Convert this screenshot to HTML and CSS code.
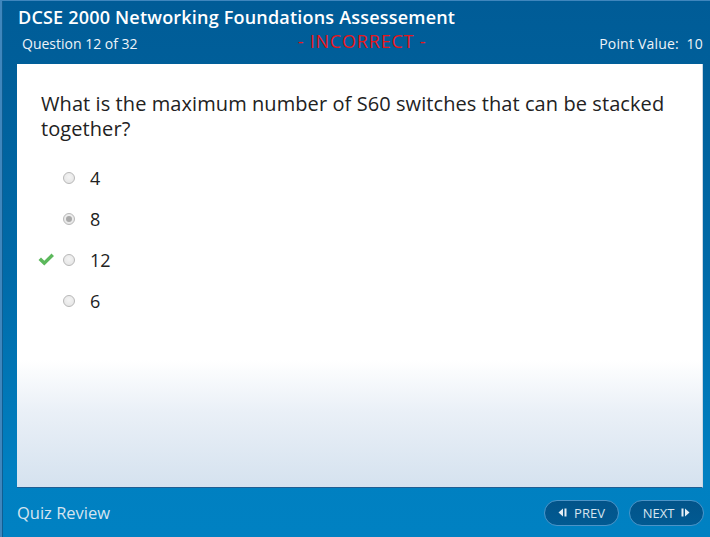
FILE: index.html
```html
<!DOCTYPE html>
<html>
<head>
<meta charset="utf-8">
<link rel="stylesheet" href="styles.css">
</head>
<body>
<div class="app">
  <header class="header">
    <h1 class="title">DCSE 2000 Networking Foundations Assessement</h1>
    <div class="subbar">
      <span class="qnum">Question 12 of 32</span>
      <span class="status">- INCORRECT -</span>
      <span class="points">Point Value:&nbsp; 10</span>
    </div>
  </header>
  <main class="panel">
    <p class="question">What is the maximum number of S60 switches that can be stacked together?</p>
    <ul class="options">
      <li class="option"><span class="mark"></span><span class="radio"></span><span class="label">4</span></li>
      <li class="option"><span class="mark"></span><span class="radio selected"></span><span class="label">8</span></li>
      <li class="option"><span class="mark"><svg width="17" height="13" viewBox="0 0 17 13"><path d="M0.5 7 L3 4.5 L6.3 7.8 L13.5 0.6 L16 3.1 L6.3 12.6 Z" fill="#5cb85c"/></svg></span><span class="radio"></span><span class="label">12</span></li>
      <li class="option"><span class="mark"></span><span class="radio"></span><span class="label">6</span></li>
    </ul>
  </main>
  <footer class="footer">
    <span class="review">Quiz Review</span>
    <div class="nav">
      <button class="btn"><svg width="9" height="9" viewBox="0 0 9 9"><path d="M5 0.5 L0.5 4.5 L5 8.5 Z M6.5 0.5 H8.5 V8.5 H6.5 Z" fill="#e6eef5"/></svg>PREV</button>
      <button class="btn">NEXT<svg width="9" height="9" viewBox="0 0 9 9"><path d="M0.5 0.5 H2.5 V8.5 H0.5 Z M4 0.5 L8.5 4.5 L4 8.5 Z" fill="#e6eef5"/></svg></button>
    </div>
  </footer>
</div>
</body>
</html>
```

FILE: styles.css
```css
* { box-sizing: border-box; }
html, body { margin: 0; padding: 0; }
body { width: 710px; height: 537px; overflow: hidden; font-family: "Open Sans", "Noto Sans", sans-serif; }

.app {
  width: 710px;
  height: 537px;
  display: flex;
  flex-direction: column;
  background: linear-gradient(#005c97 0, #005f9a 14%, #006aa8 50%, #0080c1 88%, #0081c2 100%);
  border-top: 1px solid #3f86bd;
  border-left: 2px solid #3f86bd;
  box-shadow: inset 1px 0 0 #0f5e92;
}

.header { height: 63px; padding: 0 7px 0 16px; color: #fff; }
.title {
  margin: 0;
  padding-top: 5px;
  font-family: "Open Sans", sans-serif;
  font-weight: 600;
  font-size: 18px;
  line-height: 23px;
  letter-spacing: 0.2px;
}
.subbar {
  display: grid;
  grid-template-columns: 1fr auto 1fr;
  align-items: center;
  height: 28px;
  font-size: 14px;
  color: #eef3f8;
}
.qnum { padding-left: 4px; }
.status { color: #e8161b; font-size: 18px; letter-spacing: 0.8px; margin-top: -4px; padding-left: 3px; }
.points { text-align: right; letter-spacing: 0.2px; }

.panel {
  height: 424px;
  margin: 0 7px 0 15px;
  background: linear-gradient(#fff 0, #fff 70%, #eaf0f7 82%, #d5e2ef 100%);
  border-bottom: 1px solid #1f5f94;
  border-right: 1px solid #c9d6e3;
  padding: 27px 24px 0;
}
.question {
  margin: 0;
  font-size: 20px;
  line-height: 25px;
  letter-spacing: 0.08px;
  color: #222;
}
.options { list-style: none; margin: 16px 0 0; padding: 0; }
.option {
  display: flex;
  align-items: center;
  height: 41px;
  margin-left: -3px;
}
.mark { width: 17px; height: 13px; margin-right: 8px; display: flex; }
.radio {
  width: 12px;
  height: 12px;
  border-radius: 50%;
  border: 1px solid #b8b8b8;
  background: radial-gradient(circle at 50% 40%, #f4f4f4, #e2e2e2);
  margin-right: 15px;
  position: relative;
}
.radio.selected::after {
  content: "";
  position: absolute;
  left: 2px; top: 2px;
  width: 6px; height: 6px;
  border-radius: 50%;
  background: #a9a9a9;
}
.label { font-size: 18px; color: #222; }

.footer {
  flex: 1;
  display: flex;
  align-items: center;
  justify-content: space-between;
  padding: 0 6px 0 15px;
}
.review { font-size: 16.5px; color: #d4e4f0; }
.nav { display: flex; gap: 10px; }
.btn {
  height: 26px;
  width: 75px;
  border-radius: 13px;
  border: 1px solid #4b94c8;
  background: linear-gradient(#02548a, #015a92);
  color: #d6e4ef;
  font-family: "Open Sans", sans-serif;
  font-size: 13px;
  display: flex;
  align-items: center;
  justify-content: center;
  gap: 7px;
  padding: 0;
}
```
